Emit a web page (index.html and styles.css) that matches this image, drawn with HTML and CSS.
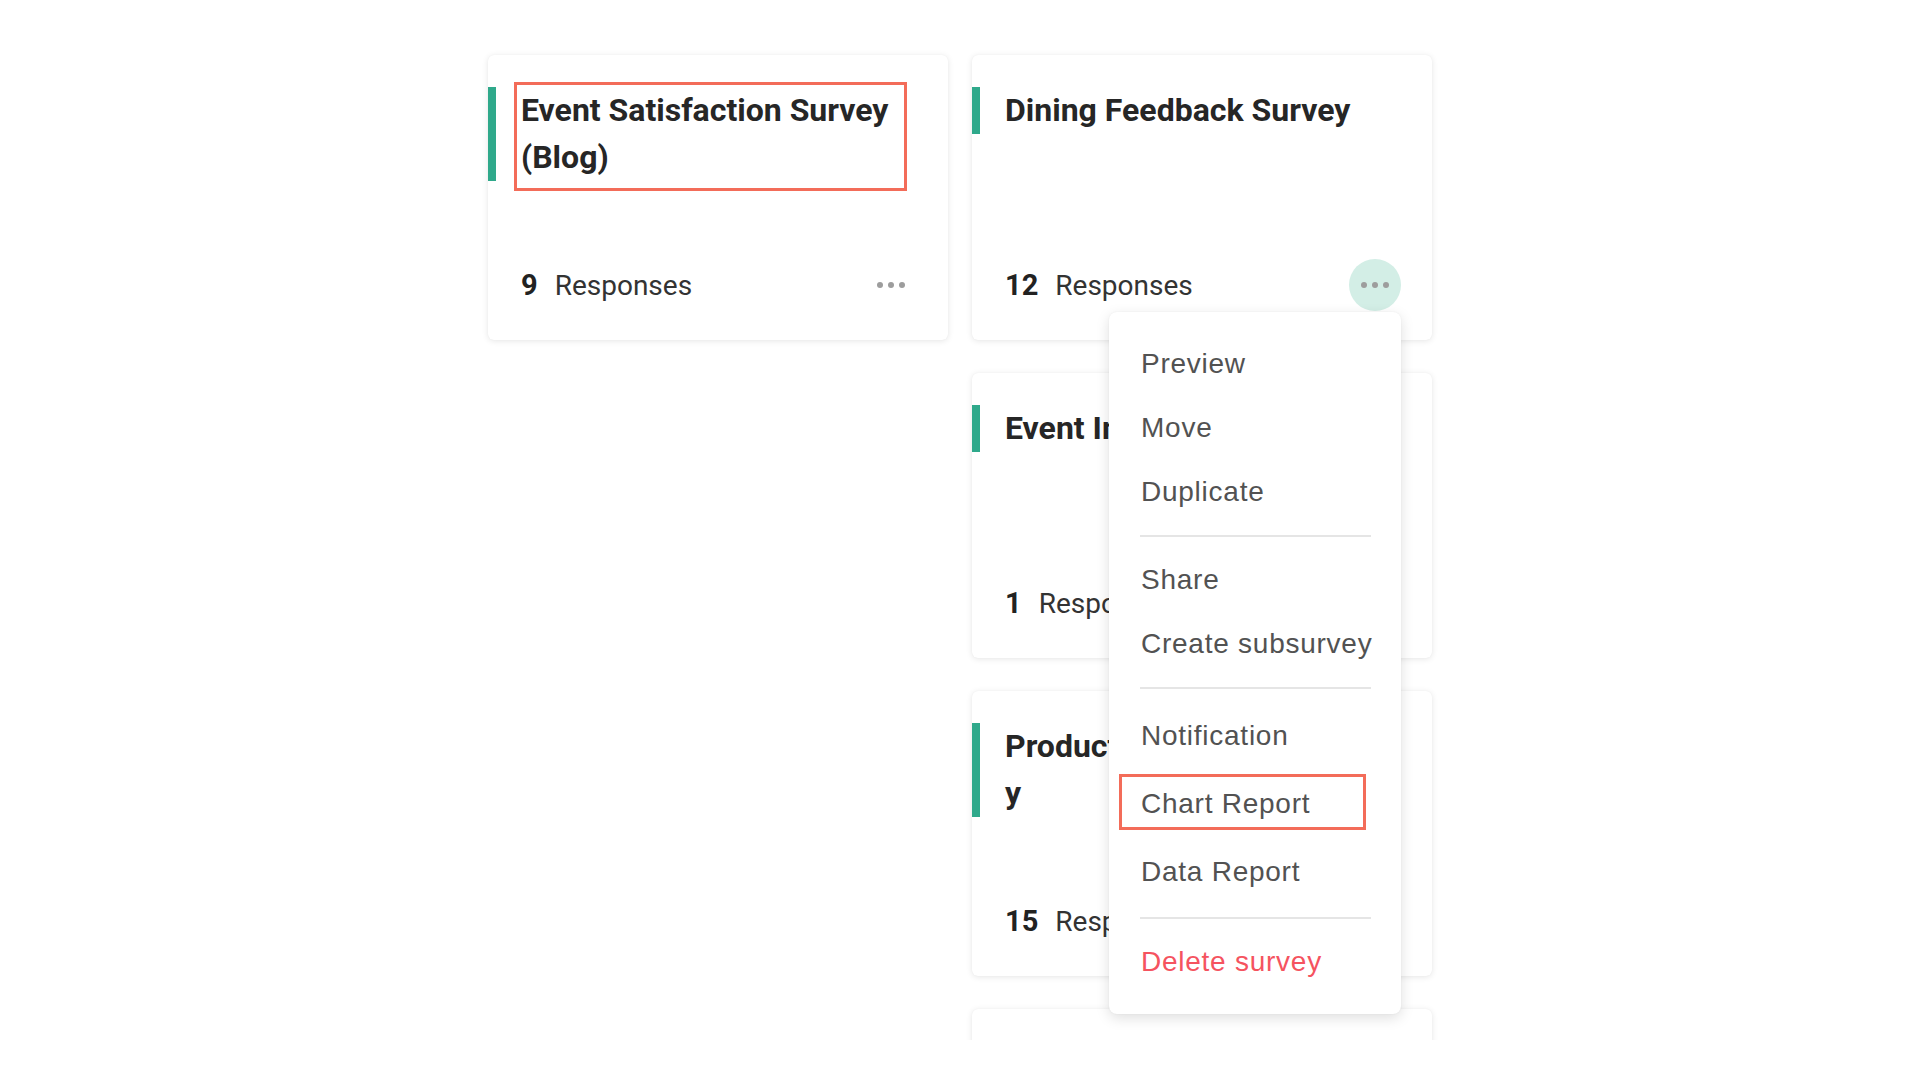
FILE: index.html
```html
<!DOCTYPE html>
<html lang="en">
<head>
<meta charset="utf-8">
<title>Surveys</title>
<link rel="stylesheet" href="styles.css">
</head>
<body>
<div class="page">
  <div class="board">
    <div class="col">
      <div class="card">
        <h3 class="title">Event Satisfaction Survey (Blog)<span class="mark mark-title"></span></h3>
        <div class="foot">
          <span class="stat"><span class="count">9</span><span class="label">Responses</span></span>
          <span class="more-wrap">
            <button class="more" type="button"><svg width="28" height="6" viewBox="0 0 28 6"><circle cx="3" cy="3" r="3"/><circle cx="14" cy="3" r="3"/><circle cx="25" cy="3" r="3"/></svg></button>
          </span>
        </div>
      </div>
    </div>
    <div class="col">
      <div class="card">
        <h3 class="title">Dining Feedback Survey</h3>
        <div class="foot">
          <span class="stat"><span class="count">12</span><span class="label">Responses</span></span>
          <span class="more-wrap">
            <button class="more active" type="button"><svg width="28" height="6" viewBox="0 0 28 6"><circle cx="3" cy="3" r="3"/><circle cx="14" cy="3" r="3"/><circle cx="25" cy="3" r="3"/></svg></button>
            <div class="menu">
              <div class="group">
                <div class="item">Preview</div>
                <div class="item">Move</div>
                <div class="item">Duplicate</div>
              </div>
              <div class="divider"></div>
              <div class="group">
                <div class="item">Share</div>
                <div class="item">Create subsurvey</div>
              </div>
              <div class="divider divider-wide"></div>
              <div class="group tall">
                <div class="item">Notification</div>
                <div class="item">Chart Report<span class="mark mark-item"></span></div>
                <div class="item">Data Report</div>
              </div>
              <div class="divider"></div>
              <div class="group">
                <div class="item danger">Delete survey</div>
              </div>
            </div>
          </span>
        </div>
      </div>
      <div class="card">
        <h3 class="title">Event Invitation Survey</h3>
        <div class="foot">
          <span class="stat"><span class="count">1</span><span class="label">Responses</span></span>
          <span class="more-wrap">
            <button class="more" type="button"><svg width="28" height="6" viewBox="0 0 28 6"><circle cx="3" cy="3" r="3"/><circle cx="14" cy="3" r="3"/><circle cx="25" cy="3" r="3"/></svg></button>
          </span>
        </div>
      </div>
      <div class="card">
        <h3 class="title break">Product Satisfaction Survey</h3>
        <div class="foot">
          <span class="stat"><span class="count">15</span><span class="label">Responses</span></span>
          <span class="more-wrap">
            <button class="more" type="button"><svg width="28" height="6" viewBox="0 0 28 6"><circle cx="3" cy="3" r="3"/><circle cx="14" cy="3" r="3"/><circle cx="25" cy="3" r="3"/></svg></button>
          </span>
        </div>
      </div>
      <div class="card">
        <h3 class="title">Customer Feedback Survey</h3>
        <div class="foot">
          <span class="stat"><span class="count">6</span><span class="label">Responses</span></span>
          <span class="more-wrap">
            <button class="more" type="button"><svg width="28" height="6" viewBox="0 0 28 6"><circle cx="3" cy="3" r="3"/><circle cx="14" cy="3" r="3"/><circle cx="25" cy="3" r="3"/></svg></button>
          </span>
        </div>
      </div>
    </div>
  </div>
</div>
</body>
</html>
```
FILE: styles.css
```css
* {
  box-sizing: border-box;
}

html, body {
  margin: 0;
  padding: 0;
  background: #ffffff;
}

body {
  font-family: Roboto, "Liberation Sans", Arial, sans-serif;
  color: #262626;
}

.page {
  height: 1040px;
  overflow: hidden;
  padding-top: 55px;
}

.board {
  display: flex;
  justify-content: center;
  gap: 24px;
}

.col {
  width: 460px;
  display: flex;
  flex-direction: column;
  gap: 33px;
}

.card {
  position: relative;
  height: 285px;
  flex: none;
  display: flex;
  flex-direction: column;
  justify-content: space-between;
  padding: 32px 0 29px 0;
  background: #fff;
  border-radius: 6px;
  box-shadow: 0 1px 6px rgba(0, 0, 0, 0.1), 0 0 1px rgba(0, 0, 0, 0.06);
}

.title {
  position: relative;
  margin: 0;
  border-left: 8px solid #2fa98b;
  padding: 0 28px 0 25px;
  font-size: 32px;
  line-height: 47px;
  font-weight: 700;
  color: #262626;
}

.title.break {
  word-break: break-all;
}

.foot {
  display: flex;
  align-items: center;
  justify-content: space-between;
  height: 52px;
  padding: 0 31px 0 33px;
}

.stat {
  display: flex;
  align-items: baseline;
}

.count {
  font-size: 29px;
  font-weight: 700;
  color: #222;
  margin-right: 17px;
}

.label {
  font-size: 28px;
  font-weight: 400;
  color: #333;
}

.more-wrap {
  position: relative;
  display: block;
  width: 52px;
  height: 52px;
}

.more {
  width: 52px;
  height: 52px;
  border: 0;
  padding: 0;
  border-radius: 50%;
  background: transparent;
  display: flex;
  align-items: center;
  justify-content: center;
  cursor: pointer;
}

.more svg {
  fill: #9d9d9d;
  display: block;
}

.more.active {
  background: #d3eee6;
}

.menu {
  position: absolute;
  top: calc(100% + 1px);
  right: 0;
  width: 292px;
  padding: 20px 0;
  background: #fff;
  border-radius: 8px;
  box-shadow: 0 4px 14px rgba(0, 0, 0, 0.13), 0 0 2px rgba(0, 0, 0, 0.06);
  z-index: 10;
  font-family: "Liberation Sans", Arial, sans-serif;
}

.item {
  position: relative;
  height: 64px;
  line-height: 64px;
  padding: 0 31px 0 32px;
  font-size: 28px;
  letter-spacing: 0.75px;
  color: #525252;
  white-space: nowrap;
}

.group.tall .item {
  height: 68px;
  line-height: 68px;
}

.item.danger {
  color: #f5535f;
}

.divider {
  height: 2px;
  margin: 11px 30px 11px 31px;
  background: #e5e5e5;
}

.divider-wide {
  margin-bottom: 13px;
}

.mark {
  position: absolute;
  border: 3px solid #f36c59;
  pointer-events: none;
}

.mark-title {
  left: 18px;
  top: -5px;
  width: 393px;
  height: 109px;
}

.mark-item {
  left: 10px;
  top: 4px;
  width: 247px;
  height: 56px;
}
```
